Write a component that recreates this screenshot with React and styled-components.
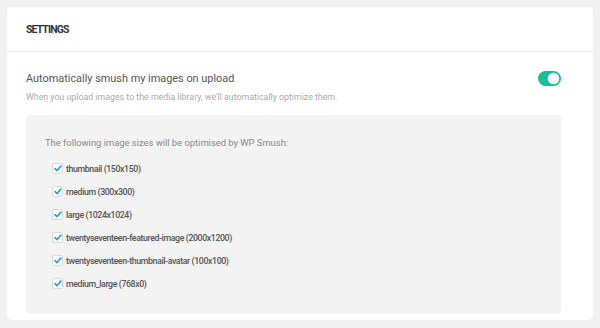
import React from "react";
import styled, { createGlobalStyle } from "styled-components";

const Global = createGlobalStyle`
  html, body { margin: 0; padding: 0; background: #f1f1f1; }
  body { font-family: Roboto, "Noto Sans", Arial, sans-serif; -webkit-font-smoothing: antialiased; }
`;

const Page = styled.div`
  width: 600px;
  height: 328px;
  box-sizing: border-box;
  padding: 7px 7px 0 7px;
  overflow: hidden;
`;

const Card = styled.section`
  background: #fff;
  border-radius: 5px;
  height: 313px;
  box-sizing: border-box;
  display: flex;
  flex-direction: column;
`;

const Header = styled.header`
  height: 45px;
  box-sizing: border-box;
  border-bottom: 1px solid #ececec;
  display: flex;
  align-items: center;
  padding: 0 19px;
`;

const Title = styled.h2`
  margin: 0;
  font-family: Roboto, Arial, sans-serif;
  font-weight: 700;
  font-size: 10.5px;
  letter-spacing: -0.9px;
  color: #333;
  text-transform: uppercase;
`;

const Body = styled.div`
  padding: 16px 32px 0 19px;
  flex: 1;
  display: flex;
  flex-direction: column;
`;

const OptionRow = styled.div`
  display: flex;
  align-items: center;
  justify-content: space-between;
  height: 20px;
`;

const Label = styled.div`
  font-size: 10.9px;
  color: #555;
`;

const Toggle = styled.span`
  position: relative;
  width: 23px;
  height: 15px;
  border-radius: 8px;
  background: #1abc9c;
  display: inline-block;
  &::after {
    content: "";
    position: absolute;
    top: 2px;
    right: 2px;
    width: 11px;
    height: 11px;
    border-radius: 50%;
    background: #fff;
    box-shadow: 0 0 0 0.5px #7fd9c6;
  }
`;

const Description = styled.p`
  margin: 3px 0 0 0;
  font-size: 8.8px;
  line-height: 12px;
  color: #aaa;
`;

const SizesBox = styled.div`
  margin-top: 12px;
  background: #f3f3f3;
  border-radius: 4px;
  height: 199px;
  box-sizing: border-box;
  padding: 21px 19px 0 19px;
`;

const SizesIntro = styled.p`
  margin: 0 0 7px 0;
  font-size: 9.4px;
  line-height: 14px;
  color: #888;
`;

const SizeRow = styled.label`
  display: flex;
  align-items: center;
  gap: 3px;
  height: 23px;
  padding-left: 7px;
`;

const Check = styled.span`
  width: 11px;
  height: 11px;
  box-sizing: border-box;
  border: 1px solid #d9d9d9;
  border-radius: 2px;
  background: #fff;
  display: inline-flex;
  align-items: center;
  justify-content: center;
`;

const SizeLabel = styled.span`
  font-size: 8.8px;
  font-weight: 500;
  letter-spacing: -0.4px;
  color: #555;
`;

const sizes = [
  "thumbnail (150x150)",
  "medium (300x300)",
  "large (1024x1024)",
  "twentyseventeen-featured-image (2000x1200)",
  "twentyseventeen-thumbnail-avatar (100x100)",
  "medium_large (768x0)",
];

const Tick = () => (
  <svg width="8" height="7" viewBox="0 0 8 7">
    <path d="M1 3.6 L3 5.6 L7 1" fill="none" stroke="#1a9fe0" strokeWidth="1.6" strokeLinecap="round" strokeLinejoin="round" />
  </svg>
);

export default function App() {
  return (
    <>
      <Global />
      <Page>
        <Card>
          <Header>
            <Title>Settings</Title>
          </Header>
          <Body>
            <OptionRow>
              <Label>Automatically smush my images on upload</Label>
              <Toggle />
            </OptionRow>
            <Description>
              When you upload images to the media library, we'll automatically optimize them.
            </Description>
            <SizesBox>
              <SizesIntro>The following image sizes will be optimised by WP Smush:</SizesIntro>
              {sizes.map((s) => (
                <SizeRow key={s}>
                  <Check>
                    <Tick />
                  </Check>
                  <SizeLabel>{s}</SizeLabel>
                </SizeRow>
              ))}
            </SizesBox>
          </Body>
        </Card>
      </Page>
    </>
  );
}
